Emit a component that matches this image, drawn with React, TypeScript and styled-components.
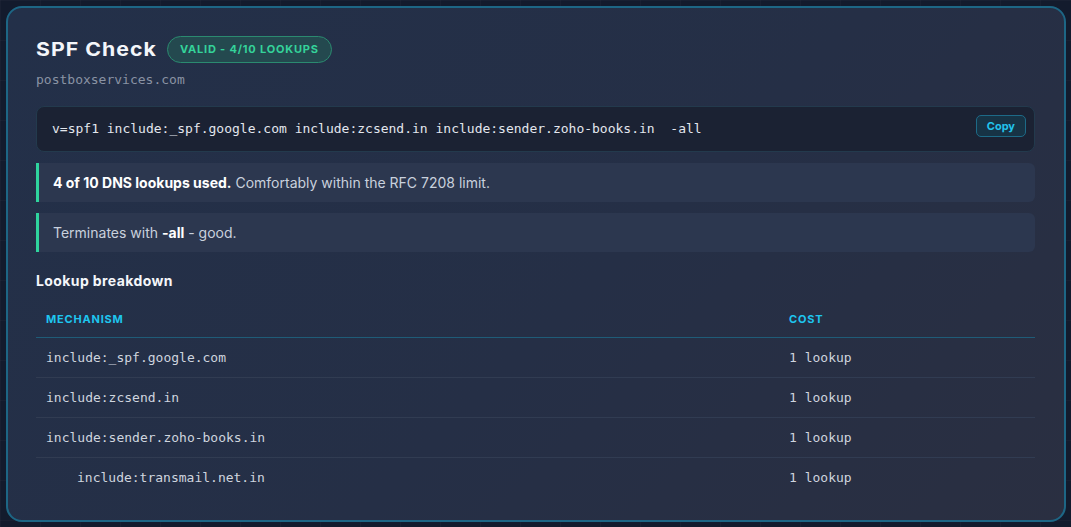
import React from 'react';
import styled, { createGlobalStyle } from 'styled-components';

const GlobalStyle = createGlobalStyle`
  html, body {
    margin: 0;
    padding: 0;
    background-color: #131b2d;
    background-image:
      linear-gradient(rgba(255, 255, 255, 0.025) 1px, transparent 1px),
      linear-gradient(90deg, rgba(255, 255, 255, 0.025) 1px, transparent 1px);
    background-size: 40px 40px;
    font-family: Inter, 'Noto Sans', sans-serif;
    -webkit-font-smoothing: antialiased;
  }
`;

const Page = styled.div`
  padding: 6px 5px 5px 6px;
  box-sizing: border-box;
  height: 527px;
`;

const Card = styled.section`
  box-sizing: border-box;
  height: 516px;
  border: 2px solid #1d6685;
  border-radius: 16px;
  background: linear-gradient(135deg, #233049 0%, #252f46 55%, #2a2f41 100%);
  padding: 26px 29px 0 28px;
  display: flex;
  flex-direction: column;
`;

const TitleRow = styled.div`
  display: flex;
  align-items: center;
  gap: 11px;
  height: 30px;
`;

const Title = styled.h2`
  margin: 0;
  font-family: Inter, sans-serif;
  font-size: 19px;
  font-weight: 700;
  letter-spacing: 0.9px;
  color: #f4f6fa;
  transform: scaleX(1.12);
  transform-origin: left center;
  margin-right: 12px;
`;

const Badge = styled.span`
  display: inline-flex;
  align-items: center;
  height: 25px;
  padding: 0 12px;
  border-radius: 999px;
  border: 1px solid #2b8a70;
  background: #24494f;
  color: #34d39a;
  font-size: 11px;
  font-weight: 700;
  letter-spacing: 0.8px;
  text-transform: uppercase;
`;

const Domain = styled.div`
  margin-top: 8px;
  font-family: 'DejaVu Sans Mono', 'Liberation Mono', monospace;
  font-size: 13px;
  color: #8a93a4;
`;

const RecordBox = styled.div`
  margin-top: 19px;
  height: 46px;
  box-sizing: border-box;
  display: flex;
  align-items: center;
  justify-content: space-between;
  padding: 0 8px 0 15px;
  background: #1b2233;
  border: 1px solid #233a4d;
  border-radius: 8px;
`;

const RecordText = styled.code`
  font-family: 'DejaVu Sans Mono', 'Liberation Mono', monospace;
  font-size: 13px;
  color: #e3e7ee;
  white-space: pre;
  margin-top: -2px;
`;

const CopyButton = styled.button`
  height: 22px;
  padding: 0 10px;
  margin-top: -6px;
  border-radius: 5px;
  border: 1px solid #1d6a87;
  background: #173345;
  color: #22c3ec;
  font-family: Inter, sans-serif;
  font-size: 11px;
  font-weight: 700;
  cursor: pointer;
`;

const Alert = styled.div`
  margin-top: 11px;
  height: 39px;
  box-sizing: border-box;
  display: flex;
  align-items: center;
  padding-left: 14px;
  border-left: 3px solid #2fd49e;
  border-radius: 0 6px 6px 0;
  background: #2c374f;
  color: #c9d1dd;
  font-size: 14px;

  strong {
    color: #ffffff;
    font-weight: 700;
  }
`;

const SectionHeading = styled.h3`
  margin: 20px 0 0;
  font-family: Inter, sans-serif;
  font-size: 14px;
  font-weight: 700;
  letter-spacing: 0.4px;
  color: #f4f6fa;
`;

const Table = styled.table`
  margin-top: 11px;
  width: 100%;
  border-collapse: collapse;
`;

const HeadCell = styled.th<{ $width?: string }>`
  width: ${p => p.$width || 'auto'};
  text-align: left;
  height: 37px;
  padding: 0 10px;
  font-size: 11px;
  font-weight: 700;
  letter-spacing: 0.8px;
  text-transform: uppercase;
  color: #1ec6ef;
  border-bottom: 1px solid #1f5c78;
`;

const Row = styled.tr<{ $last?: boolean }>`
  td {
    border-bottom: 1px solid ${p => (p.$last ? 'transparent' : '#313c52')};
  }
`;

const Cell = styled.td<{ $depth?: number }>`
  height: 39px;
  padding: 0 10px 0 ${p => 10 + (p.$depth || 0) * 31}px;
  font-family: 'DejaVu Sans Mono', 'Liberation Mono', monospace;
  font-size: 13px;
  color: #cfd5df;
`;

const lookups = [
  { mechanism: 'include:_spf.google.com', depth: 0 },
  { mechanism: 'include:zcsend.in', depth: 0 },
  { mechanism: 'include:sender.zoho-books.in', depth: 0 },
  { mechanism: 'include:transmail.net.in', depth: 1 },
];

const App: React.FC = () => {
  return (
    <>
      <GlobalStyle />
      <Page>
        <Card>
          <TitleRow>
            <Title>SPF Check</Title>
            <Badge>Valid - 4/10 lookups</Badge>
          </TitleRow>
          <Domain>postboxservices.com</Domain>

          <RecordBox>
            <RecordText>v=spf1 include:_spf.google.com include:zcsend.in include:sender.zoho-books.in  -all</RecordText>
            <CopyButton>Copy</CopyButton>
          </RecordBox>

          <Alert>
            <span>
              <strong>4 of 10 DNS lookups used.</strong> Comfortably within the RFC 7208 limit.
            </span>
          </Alert>
          <Alert>
            <span>
              Terminates with <strong>-all</strong> - good.
            </span>
          </Alert>

          <SectionHeading>Lookup breakdown</SectionHeading>
          <Table>
            <thead>
              <tr>
                <HeadCell $width="723px">Mechanism</HeadCell>
                <HeadCell>Cost</HeadCell>
              </tr>
            </thead>
            <tbody>
              {lookups.map((l, i) => (
                <Row key={l.mechanism} $last={i === lookups.length - 1}>
                  <Cell $depth={l.depth}>{l.mechanism}</Cell>
                  <Cell>1 lookup</Cell>
                </Row>
              ))}
            </tbody>
          </Table>
        </Card>
      </Page>
    </>
  );
};

export default App;
